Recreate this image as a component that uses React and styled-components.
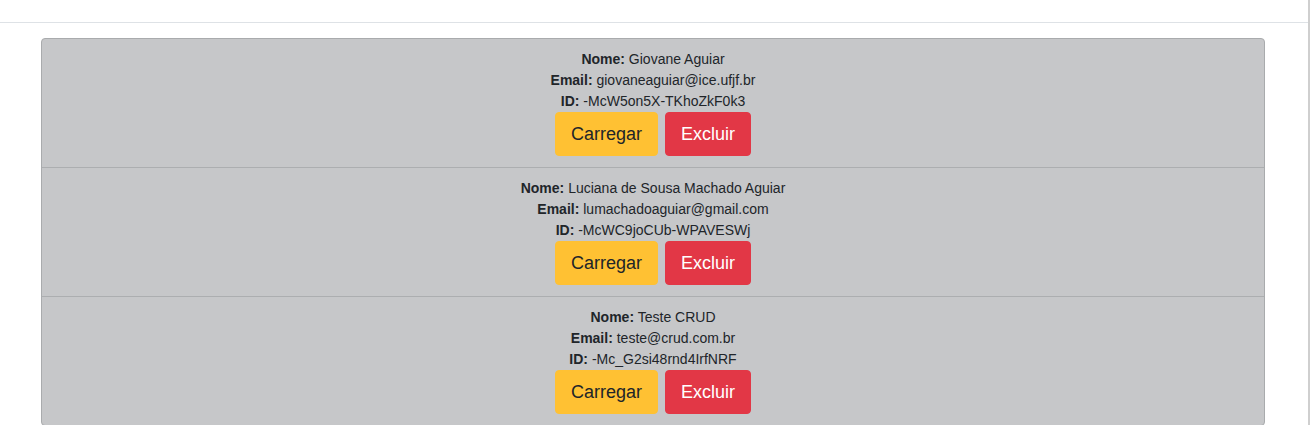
import styled, { createGlobalStyle } from 'styled-components';

const usuarios = [
  { id: '-McW5on5X-TKhoZkF0k3', nome: 'Giovane Aguiar', email: 'giovaneaguiar@ice.ufjf.br' },
  { id: '-McWC9joCUb-WPAVESWj', nome: 'Luciana de Sousa Machado Aguiar', email: 'lumachadoaguiar@gmail.com' },
  { id: '-Mc_G2si48rnd4IrfNRF', nome: 'Teste CRUD', email: 'teste@crud.com.br' },
];

const GlobalStyle = createGlobalStyle`
  body {
    margin: 0;
    background: #fff;
    font-family: "Liberation Sans", Arial, sans-serif;
    color: #212529;
  }
`;

const Page = styled.div`
  width: 1308px;
  height: 425px;
  border-right: 2px solid #cfcfcf;
  overflow: hidden;
`;

const TopBar = styled.div`
  height: 22px;
  border-bottom: 1px solid #dee2e6;
`;

const Lista = styled.ul`
  list-style: none;
  margin: 15px 43px 0 41px;
  padding: 0;
  background: #c6c7c9;
  border: 1px solid #a9abad;
  border-radius: 4px;
`;

const Item = styled.li`
  display: flex;
  flex-direction: column;
  align-items: center;
  padding: 10px 0 11px;
  border-top: ${(p) => (p.$first ? 'none' : '1px solid #acaeb0')};
  font-size: 14px;
  line-height: 21px;
`;

const Linha = styled.div`
  b {
    font-weight: 700;
  }
`;

const Acoes = styled.div`
  display: flex;
  gap: 7px;
`;

const Botao = styled.button`
  font-family: "Liberation Sans", Arial, sans-serif;
  font-size: 18px;
  line-height: 26px;
  padding: 8px 15px;
  border: 1px solid ${(p) => (p.$tipo === 'danger' ? '#e23746' : '#ffc133')};
  border-radius: 4px;
  background: ${(p) => (p.$tipo === 'danger' ? '#e23746' : '#ffc133')};
  color: ${(p) => (p.$tipo === 'danger' ? '#fff' : '#212529')};
  cursor: pointer;
`;

const App = () => {
  return (
    <Page>
      <GlobalStyle />
      <TopBar />
      <Lista>
        {usuarios.map((u, i) => (
          <Item key={u.id} $first={i === 0}>
            <Linha>
              <b>Nome:</b> {u.nome}
            </Linha>
            <Linha>
              <b>Email:</b> {u.email}
            </Linha>
            <Linha>
              <b>ID:</b> {u.id}
            </Linha>
            <Acoes>
              <Botao $tipo="warning">Carregar</Botao>
              <Botao $tipo="danger">Excluir</Botao>
            </Acoes>
          </Item>
        ))}
      </Lista>
    </Page>
  );
};

export default App;
